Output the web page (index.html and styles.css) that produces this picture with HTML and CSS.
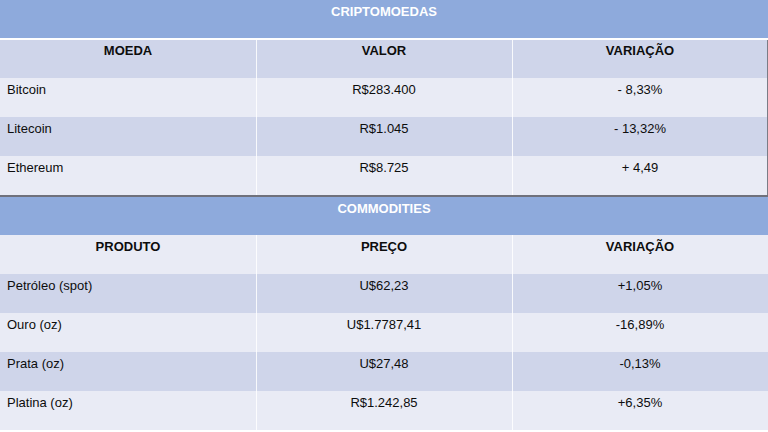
FILE: index.html
```html
<!DOCTYPE html>
<html lang="pt">
<head>
<meta charset="utf-8">
<title>Cotações</title>
<link rel="stylesheet" href="styles.css">
</head>
<body>
<main class="sheet">
  <section class="tbl tbl-crypto">
    <div class="title">CRIPTOMOEDAS</div>
    <div class="row head dark">
      <div class="cell">MOEDA</div>
      <div class="cell">VALOR</div>
      <div class="cell">VARIAÇÃO</div>
    </div>
    <div class="row light">
      <div class="cell">Bitcoin</div>
      <div class="cell">R$283.400</div>
      <div class="cell">- 8,33%</div>
    </div>
    <div class="row dark">
      <div class="cell">Litecoin</div>
      <div class="cell">R$1.045</div>
      <div class="cell">- 13,32%</div>
    </div>
    <div class="row light">
      <div class="cell">Ethereum</div>
      <div class="cell">R$8.725</div>
      <div class="cell">+ 4,49</div>
    </div>
  </section>
  <section class="tbl tbl-comm">
    <div class="title">COMMODITIES</div>
    <div class="row head light">
      <div class="cell">PRODUTO</div>
      <div class="cell">PREÇO</div>
      <div class="cell">VARIAÇÃO</div>
    </div>
    <div class="row dark">
      <div class="cell">Petróleo (spot)</div>
      <div class="cell">U$62,23</div>
      <div class="cell">+1,05%</div>
    </div>
    <div class="row light">
      <div class="cell">Ouro (oz)</div>
      <div class="cell">U$1.7787,41</div>
      <div class="cell">-16,89%</div>
    </div>
    <div class="row dark">
      <div class="cell">Prata (oz)</div>
      <div class="cell">U$27,48</div>
      <div class="cell">-0,13%</div>
    </div>
    <div class="row light">
      <div class="cell">Platina (oz)</div>
      <div class="cell">R$1.242,85</div>
      <div class="cell">+6,35%</div>
    </div>
  </section>
</main>
</body>
</html>
```
FILE: styles.css
```css
* { box-sizing: border-box; }
html, body {
  margin: 0;
  padding: 0;
  background: #ffffff;
}
body {
  font-family: "Liberation Sans", Arial, sans-serif;
  font-size: 13px;
  line-height: 16px;
  color: #0d0d0d;
}
.sheet {
  width: 768px;
  height: 432px;
  display: flex;
  flex-direction: column;
}
.tbl {
  display: flex;
  flex-direction: column;
}
.title {
  height: 38px;
  padding-top: 4px;
  background: #8eaadc;
  color: #ffffff;
  font-weight: bold;
  text-align: center;
}
.tbl-crypto .title {
  height: 40px;
  border-bottom: 2px solid #ffffff;
}
.tbl-crypto {
  border-bottom: 2px solid #6f717c;
}
.row {
  display: grid;
  grid-template-columns: 256px 256px 256px;
  height: 39px;
}
.row.head {
  font-weight: bold;
}
.tbl-crypto .row.head { height: 38px; }
.tbl-crypto .row.head .cell { padding-top: 3px; }
.row.dark { background: #cfd5ea; }
.row.light { background: #e9ebf5; }
.cell {
  padding: 4px 7px 0;
  text-align: center;
}
.row .cell:first-child { text-align: left; }
.row.head .cell:first-child { text-align: center; }
.cell + .cell { box-shadow: inset 1px 0 0 rgba(255, 255, 255, 0.85); }
.tbl-crypto .row .cell:last-child {
  box-shadow: inset 1px 0 0 rgba(255, 255, 255, 0.85), inset -1px 0 0 #7a7c86;
}
```
